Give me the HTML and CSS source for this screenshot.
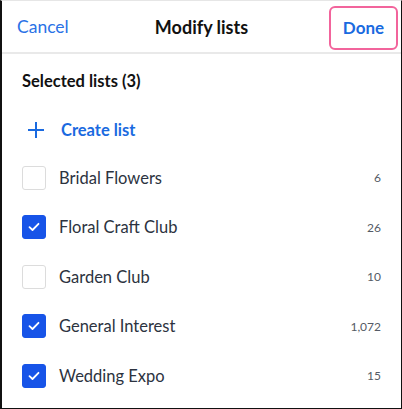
FILE: index.html
```html
<!DOCTYPE html>
<html>
<head>
<meta charset="utf-8">
<link rel="stylesheet" href="styles.css">
</head>
<body>
<div class="frame">
  <header class="topbar">
    <span class="cancel">Cancel</span>
    <span class="title">Modify lists</span>
    <span class="done">Done</span>
  </header>
  <div class="content">
    <div class="section-title">Selected lists (3)</div>
    <div class="create">
      <svg class="plus" width="18" height="18" viewBox="0 0 18 18"><path d="M9 1v16M1 9h16" stroke="#1a6ae0" stroke-width="2" fill="none"/></svg>
      <span>Create list</span>
    </div>
    <ul class="lists">
      <li class="row"><span class="box"></span><span class="name">Bridal Flowers</span><span class="count">6</span></li>
      <li class="row"><span class="box checked"><svg width="12" height="10" viewBox="0 0 12 10"><path d="M1.5 5.2l3 2.8 6-6.2" stroke="#fff" stroke-width="1.8" fill="none" stroke-linecap="round" stroke-linejoin="round"/></svg></span><span class="name">Floral Craft Club</span><span class="count">26</span></li>
      <li class="row"><span class="box"></span><span class="name">Garden Club</span><span class="count">10</span></li>
      <li class="row"><span class="box checked"><svg width="12" height="10" viewBox="0 0 12 10"><path d="M1.5 5.2l3 2.8 6-6.2" stroke="#fff" stroke-width="1.8" fill="none" stroke-linecap="round" stroke-linejoin="round"/></svg></span><span class="name">General Interest</span><span class="count">1,072</span></li>
      <li class="row"><span class="box checked"><svg width="12" height="10" viewBox="0 0 12 10"><path d="M1.5 5.2l3 2.8 6-6.2" stroke="#fff" stroke-width="1.8" fill="none" stroke-linecap="round" stroke-linejoin="round"/></svg></span><span class="name">Wedding Expo</span><span class="count">15</span></li>
    </ul>
  </div>
</div>
</body>
</html>
```

FILE: styles.css
```css
html, body {
  margin: 0;
  padding: 0;
  background: #fff;
}
body {
  font-family: Lato, "Open Sans", sans-serif;
  color: #1a1a1a;
}
.frame {
  box-sizing: border-box;
  width: 402px;
  height: 409px;
  border-left: 2px solid #111;
  border-right: 1px solid #111;
  border-bottom: 1px solid #111;
  border-top: 1px solid #e6e6e6;
  overflow: hidden;
}
.topbar {
  height: 51px;
  border-bottom: 2px solid #e9e9e9;
  display: flex;
  align-items: center;
  justify-content: space-between;
  padding: 0 3px 0 15px;
  position: relative;
}
.cancel {
  font-size: 17.5px;
  color: #2a72e6;
}
.title {
  position: absolute;
  left: 0;
  right: 0;
  text-align: center;
  font-size: 18px;
  font-weight: 700;
  color: #111;
  pointer-events: none;
}
.done {
  box-sizing: border-box;
  width: 69px;
  height: 44px;
  margin-top: 2px;
  border: 2.5px solid #f2649c;
  border-radius: 6px;
  display: flex;
  align-items: center;
  justify-content: center;
  font-size: 17px;
  font-weight: 700;
  color: #1a6ae0;
}
.content {
  padding: 0 19px 0 20px;
}
.section-title {
  font-size: 16.5px;
  font-weight: 700;
  color: #111;
  height: 50px;
  display: flex;
  align-items: center;
  padding-top: 2px;
}
.create {
  height: 47px;
  display: flex;
  align-items: center;
  gap: 16px;
  padding-left: 5px;
  font-size: 16.5px;
  font-weight: 700;
  color: #1a6ae0;
}
.lists {
  list-style: none;
  margin: 0;
  padding: 0;
}
.row {
  height: 49.5px;
  display: flex;
  align-items: center;
}
.box {
  box-sizing: border-box;
  width: 24px;
  height: 24px;
  border: 1px solid #dcdcdc;
  border-radius: 3px;
  margin-right: 13px;
  display: flex;
  align-items: center;
  justify-content: center;
  flex: none;
}
.box.checked {
  background: #1754e8;
  border-color: #1754e8;
}
.name {
  font-size: 16.5px;
  color: #2c3340;
  flex: 1;
}
.count {
  font-size: 12px;
  color: #555b66;
  margin-right: 1px;
}
```
